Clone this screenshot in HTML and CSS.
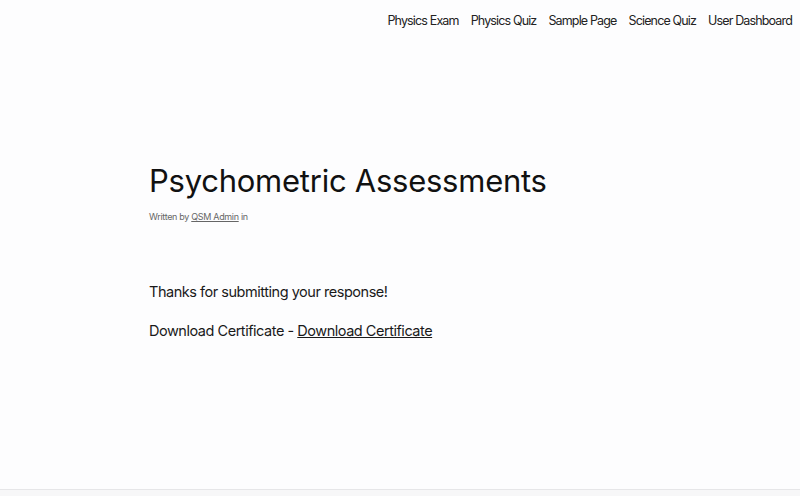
FILE: index.html
```html
<!DOCTYPE html>
<html lang="en">
<head>
<meta charset="utf-8">
<title>Psychometric Assessments</title>
<link rel="stylesheet" href="styles.css">
</head>
<body>
<header class="site-header">
  <nav class="main-nav">
    <a href="#">Physics Exam</a>
    <a href="#">Physics Quiz</a>
    <a href="#">Sample Page</a>
    <a href="#">Science Quiz</a>
    <a href="#">User Dashboard</a>
  </nav>
</header>
<main class="content">
  <h1 class="entry-title">Psychometric Assessments</h1>
  <p class="entry-meta">Written by <a href="#">QSM Admin</a> in</p>
  <div class="entry-body">
    <p>Thanks for submitting your response!</p>
    <p>Download Certificate - <a href="#">Download Certificate</a></p>
  </div>
</main>
<footer class="bottom-line"></footer>
</body>
</html>
```
FILE: styles.css
```css
html, body {
  margin: 0;
  padding: 0;
}
body {
  width: 800px;
  height: 496px;
  background: #fdfdfe;
  font-family: Inter, "Noto Sans", sans-serif;
  color: #1a1a1a;
  display: flex;
  flex-direction: column;
  overflow: hidden;
}
.site-header {
  display: flex;
  justify-content: flex-end;
  padding: 13px 8px 0 0;
  height: 90px;
  box-sizing: border-box;
}
.main-nav {
  display: flex;
  gap: 12px;
  font-size: 12.5px;
  letter-spacing: -0.85px;
  line-height: 16px;
}
.main-nav a {
  color: #222;
  text-decoration: none;
}
.content {
  flex: 1;
  padding: 71px 0 0 149px;
}
.entry-title {
  margin: 0;
  font-size: 31px;
  font-weight: 400;
  letter-spacing: -0.25px;
  line-height: 40px;
  color: #111;
}
.entry-meta {
  margin: 10px 0 0;
  font-size: 9px;
  color: #666;
  letter-spacing: -0.33px;
}
.entry-meta a {
  color: #666;
}
.entry-body {
  margin-top: 59px;
  font-size: 14.5px;
  letter-spacing: -0.47px;
  color: #1a1a1a;
}
.entry-body p {
  margin: 0 0 17px;
  line-height: 22px;
}
.entry-body a {
  color: #1a1a1a;
}
.bottom-line {
  height: 6px;
  border-top: 1px solid #e6e6e8;
  background: #f7f7f8;
}
```
